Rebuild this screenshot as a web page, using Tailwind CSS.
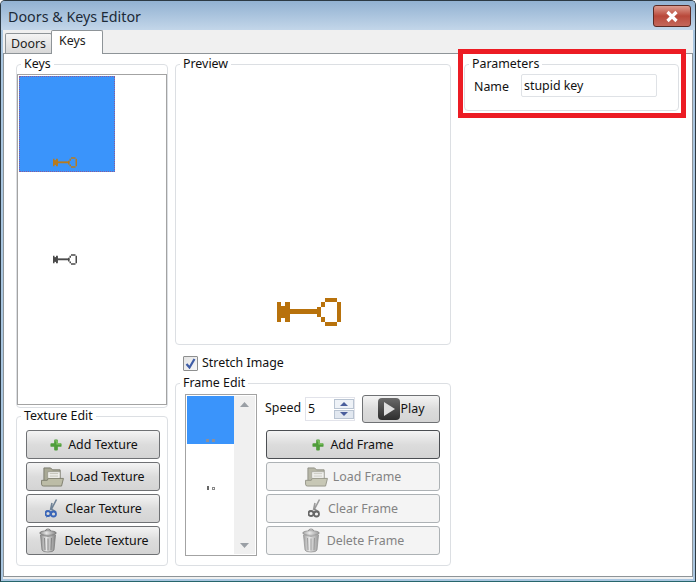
<!DOCTYPE html>
<html><head><meta charset="utf-8">
<script src="https://cdn.jsdelivr.net/npm/@tailwindcss/browser@4"></script>
</head>
<body class="m-0 bg-white">
<svg width="0" height="0" class="absolute">
<defs>
<symbol id="plus" viewBox="0 0 13 13"><path d="M4.500 1.500q0-1 1-1h2q1 0 1 1v3h3q1 0 1 1v2q0 1-1 1h-3v3q0 1-1 1h-2q-1 0-1-1v-3h-3q-1 0-1-1v-2q0-1 1-1h3z" fill="#4f9d3a"/><path d="M5 1.500h3v3.500h3.500v1H7V2.500H5z" fill="#8fd06f"/></symbol>
<symbol id="folder" viewBox="0 0 24 21"><path d="M3 1h7l2 2h8v15H3z" fill="#a9a995" stroke="#77776a"/><path d="M7 5h13v10H7z" fill="#f4f4f0" stroke="#8d8d80" stroke-width=".7"/><path d="M9 7h9M9 9.500h9" stroke="#bdbdb2"/><path d="M0.500 14h6l1-2h16l-2 8H2.500q-2 0-2-2z" fill="#bcbca6" stroke="#7e7e6e"/></symbol>
<symbol id="sc" viewBox="0 0 13 19"><path d="M11.500 0.500 6 11M7 4 5.500 11" stroke="#6f8296" stroke-width="1.600" fill="none"/><path d="M6 10 11 13" stroke="#6f8296" stroke-width="1.500"/><circle cx="3" cy="14.500" r="2.500" fill="none" stroke="#3a66b8" stroke-width="1.800"/><circle cx="8.500" cy="15" r="2.500" fill="none" stroke="#3a66b8" stroke-width="1.800"/><path d="M1 18l3-1" stroke="#3a66b8"/></symbol>
<symbol id="scg" viewBox="0 0 13 19"><path d="M11.500 0.500 6 11M7 4 5.500 11" stroke="#9a9a9a" stroke-width="1.600" fill="none"/><path d="M6 10 11 13" stroke="#888" stroke-width="1.500"/><circle cx="3" cy="14.500" r="2.500" fill="none" stroke="#666" stroke-width="1.800"/><circle cx="8.500" cy="15" r="2.500" fill="none" stroke="#666" stroke-width="1.800"/></symbol>
<symbol id="trash" viewBox="0 0 18 25"><defs><linearGradient id="tg"><stop offset="0" stop-color="#8d8d8d"/><stop offset=".4" stop-color="#e6e6e6"/><stop offset="1" stop-color="#858585"/></linearGradient></defs><path d="M6.500 3q0-2 2.500-2t2.500 2" fill="none" stroke="#777"/><ellipse cx="9" cy="5" rx="8.300" ry="2.300" fill="url(#tg)" stroke="#6e6e6e" stroke-width=".7"/><path d="M1.500 7l1.500 15q.5 2 6 2t6-2l1.500-15q-7.500 3-15 0z" fill="url(#tg)" stroke="#777" stroke-width=".7"/><path d="M5.500 10l.5 12M9 10.500v12M12.500 10l-.5 12" stroke="#777" stroke-width=".8"/></symbol>
<symbol id="key" viewBox="0 0 64 28"><path d="M0 4h4v4h4V4h5v20H8v-4H4v4H0z" fill="currentColor"/><rect x="4" y="8" width="9" height="12" fill="currentColor" opacity=".75"/><rect x="13" y="11" width="31" height="5" fill="currentColor"/><path d="M48 0h12v4h4v20h-4v4H48v-4h-4v-5h-4V9h4V4h4zm0 4v5h-4v10h4v5h12V4z" fill="currentColor" fill-rule="evenodd"/></symbol>
</defs></svg>

<div class="relative w-[696px] h-[582px] flex flex-col overflow-hidden rounded-t-[5px] border border-[#2c3a44] border-b-[#27666c] bg-[#a9c6e0] font-['Noto_Sans',sans-serif] text-[12.400px] leading-[16px] text-[#111]">
  <!-- title bar -->
  <div class="h-[29px] shrink-0 flex items-start justify-between bg-gradient-to-b from-[#92b2d2] to-[#c3d6e9] pl-[7px] pr-[4px]">
    <span class="mt-[7px] text-[14.300px] leading-[18px] text-[#1c2a38]">Doors &amp; Keys Editor</span>
    <div class="mt-[4px] w-[38px] h-[22px] rounded-[3px] border border-[#5a2a24] bg-gradient-to-b from-[#dc9c90] via-[#b9483a] to-[#c4675a] flex items-center justify-center">
      <svg width="14" height="13" viewBox="0 0 14 13"><path d="M2.500 2l9 9M11.500 2l-9 9" stroke="#fff" stroke-width="3.200"/></svg>
    </div>
  </div>
  <!-- client -->
  <div class="flex-1 mx-[2px] mb-[2px] pb-[2px] flex flex-col bg-[#f0f0f0] min-h-0">
    <!-- tabs -->
    <div class="h-[23px] shrink-0 flex items-end pl-[2px] relative z-10">
      <div class="w-[47px] h-[20px] border border-b-0 border-[#8e9498] rounded-t-[2px] bg-gradient-to-b from-[#f4f4f4] to-[#d8d8d8] text-center leading-[20px] text-[#222]">Doors</div>
      <div class="w-[52px] h-[24px] -mb-[1px] -ml-[1px] border border-b-0 border-[#8e9498] rounded-t-[2px] bg-white pl-[7px] leading-[20px] text-[#222]">Keys</div>
    </div>
    <!-- pane -->
    <div class="relative flex-1 border border-[#8e9498] bg-white flex pl-[12px] pt-[2px] min-h-0">
      <!-- col 1 -->
      <div class="w-[152px] shrink-0 flex flex-col">
        <fieldset class="h-[352px] shrink-0 border border-[#dcdfe3] rounded-[4px] min-w-0">
          <legend class="ml-[4px] px-[3px] h-[16px] leading-[16px]">Keys</legend>
          <div class="mt-[2px] h-[331px] border border-[#a3a3a3] bg-white p-[1px]">
            <div class="w-[96px] h-[96px] bg-[#3a94fb] border border-dotted border-[#8a5a9a] flex flex-col items-center justify-end pb-[3px] pr-[4px] text-[#b87b1e]">
              <svg width="24" height="11"><use href="#key"/></svg>
            </div>
            <div class="w-[96px] h-[96px] flex flex-col items-center justify-end pb-[3px] pr-[4px] text-[#4a4a4a]">
              <svg width="24" height="11"><use href="#key"/></svg>
            </div>
          </div>
        </fieldset>
        <fieldset class="h-[158px] shrink-0 border border-[#dcdfe3] rounded-[4px] min-w-0 pl-[9px] pr-[7px]">
          <legend class="ml-[-5px] px-[3px] h-[16px] leading-[16px]">Texture Edit</legend>
          <div class="flex flex-col gap-[3px] mt-[6px]">
            <button class="h-[29px] pl-[2px] border border-[#6f7174] rounded-[3px] bg-gradient-to-b from-[#f4f4f4] via-[#dcdcdc] to-[#d4d4d4] flex items-center justify-center gap-[6px]"><svg width="12" height="12"><use href="#plus"/></svg>Add Texture</button>
            <button class="h-[29px] border border-[#6f7174] rounded-[3px] bg-gradient-to-b from-[#f4f4f4] via-[#dcdcdc] to-[#d4d4d4] flex items-center justify-center gap-[5px]"><svg width="23" height="20"><use href="#folder"/></svg>Load Texture</button>
            <button class="h-[29px] pl-[1px] border border-[#6f7174] rounded-[3px] bg-gradient-to-b from-[#f4f4f4] via-[#dcdcdc] to-[#d4d4d4] flex items-center justify-center gap-[7px]"><svg width="13" height="19"><use href="#sc"/></svg>Clear Texture</button>
            <button class="h-[29px] pl-[2px] border border-[#6f7174] rounded-[3px] bg-gradient-to-b from-[#f4f4f4] via-[#dcdcdc] to-[#d4d4d4] flex items-center justify-center gap-[7px]"><svg width="18" height="25"><use href="#trash"/></svg>Delete Texture</button>
          </div>
        </fieldset>
      </div>
      <!-- col 2 -->
      <div class="ml-[7px] w-[276px] shrink-0 flex flex-col">
        <fieldset class="h-[289px] shrink-0 border border-[#dcdfe3] rounded-[4px] min-w-0">
          <legend class="ml-[4px] px-[3px] h-[16px] leading-[16px]">Preview</legend>
          <div class="h-[271px] flex flex-col items-start justify-end pl-[101px] pb-[17px] text-[#b8720c]">
            <svg width="64" height="28" shape-rendering="crispEdges"><use href="#key"/></svg>
          </div>
        </fieldset>
        <div class="h-[16px] mt-[10px] ml-[8px] flex items-center gap-[4px]">
          <div class="w-[15px] h-[15px] border border-[#8e8f8f] rounded-[1px] bg-gradient-to-br from-[#e4e4e4] to-[#f8f8f8] flex items-center justify-center">
            <svg width="11" height="11" viewBox="0 0 11 11"><path d="M1.500 6l3 3.500L9.500 1" fill="none" stroke="#3f5da6" stroke-width="2.200"/></svg>
          </div>
          <span>Stretch Image</span>
        </div>
        <fieldset class="mt-[4px] h-[191px] shrink-0 border border-[#dcdfe3] rounded-[4px] min-w-0">
          <legend class="ml-[4px] px-[3px] h-[16px] leading-[16px]">Frame Edit</legend>
          <div class="flex pl-[9px] pt-[3px]">
            <div class="w-[72px] h-[162px] border border-[#a3a3a3] p-[1px] flex shrink-0">
              <div class="w-[47px] flex flex-col">
                <div class="h-[48px] bg-[#3a94fb] flex justify-center items-end gap-[3px] pb-[2px]"><i class="w-[3px] h-[3px] bg-[#8c8f9c]"></i><i class="w-[3px] h-[3px] bg-[#8c8f9c]"></i></div>
                <div class="h-[48px] flex justify-center items-end gap-[3px] pb-[2px]"><i class="w-[2px] h-[4px] bg-[#666]"></i><i class="w-[3px] h-[3px] border border-[#888]"></i></div>
              </div>
              <div class="flex-1 bg-[#f0f0f0] flex flex-col justify-between items-center py-[6px]">
                <svg width="9" height="5"><path d="M4.500 0 9 5H0z" fill="#9a9fa5"/></svg>
                <svg width="9" height="5"><path d="M0 0h9L4.500 5z" fill="#9a9fa5"/></svg>
              </div>
            </div>
            <div class="ml-[9px] mt-[1px] w-[174px] flex flex-col">
              <div class="flex items-center h-[28px] mb-[7px]">
                <span class="w-[39px] -ml-[1px] mr-[1px] -mt-[2px]">Speed</span>
                <div class="w-[50px] h-[24px] border border-[#e2e3ea] flex items-center pl-[2px]">
                  <span class="flex-1">5</span>
                  <div class="w-[20px] h-[20px] flex flex-col gap-[1px]">
                    <div class="flex-1 border border-[#b9c4d2] bg-[#eef2f7] flex items-center justify-center"><svg width="8" height="4"><path d="M4 0l4 4H0z" fill="#4a5e9c"/></svg></div>
                    <div class="flex-1 border border-[#b9c4d2] bg-[#e2e8f0] flex items-center justify-center"><svg width="8" height="4"><path d="M0 0h8L4 4z" fill="#4a5e9c"/></svg></div>
                  </div>
                </div>
                <button class="ml-[7px] w-[78px] h-[28px] border border-[#6f7174] rounded-[3px] bg-gradient-to-b from-[#f4f4f4] via-[#dcdcdc] to-[#d4d4d4] flex items-center justify-center gap-[1px]">
                  <span class="w-[22px] h-[22px] rounded-[4px] bg-gradient-to-b from-[#6a6a6a] to-[#2e2e2e] flex items-center justify-center"><svg width="12" height="14"><path d="M1 0l11 7-11 7z" fill="#dedede"/></svg></span>Play
                </button>
              </div>
              <div class="flex flex-col gap-[3px]">
                <button class="h-[29px] border border-[#4b4e52] rounded-[3px] bg-gradient-to-b from-[#f4f4f4] via-[#dcdcdc] to-[#d4d4d4] flex items-center justify-center gap-[6px]"><svg width="12" height="12"><use href="#plus"/></svg>Add Frame</button>
                <button class="h-[29px] border border-[#adb2b5] rounded-[3px] bg-[#f4f4f4] text-[#838383] flex items-center justify-center gap-[5px]"><svg width="23" height="20" class="opacity-80"><use href="#folder"/></svg>Load Frame</button>
                <button class="h-[29px] border border-[#adb2b5] rounded-[3px] bg-[#f4f4f4] text-[#838383] flex items-center justify-center gap-[7px]"><svg width="13" height="19"><use href="#scg"/></svg>Clear Frame</button>
                <button class="h-[29px] border border-[#adb2b5] rounded-[3px] bg-[#f4f4f4] text-[#838383] flex items-center justify-center gap-[7px]"><svg width="18" height="25" class="opacity-80"><use href="#trash"/></svg>Delete Frame</button>
              </div>
            </div>
          </div>
        </fieldset>
      </div>
      <!-- col 3 -->
      <div class="ml-[13px] w-[215px] shrink-0">
        <fieldset class="h-[55px] border border-[#dcdfe3] rounded-[4px] min-w-0">
          <legend class="ml-[4px] px-[3px] h-[16px] leading-[16px]">Parameters</legend>
          <div class="flex items-center pl-[9px] mt-[2px]">
            <span class="w-[47px] mt-[2px]">Name</span>
            <div class="w-[136px] h-[23px] border border-[#dfe2e6] rounded-[2px] pl-[2px] leading-[21px]">stupid key</div>
          </div>
        </fieldset>
      </div>
      <!-- annotation -->
      <div class="absolute left-[454px] top-[-5px] w-[228px] h-[69px] border-[5px] border-[#ec1c24]"></div>
    </div>
  </div>
</div>
</body></html>
